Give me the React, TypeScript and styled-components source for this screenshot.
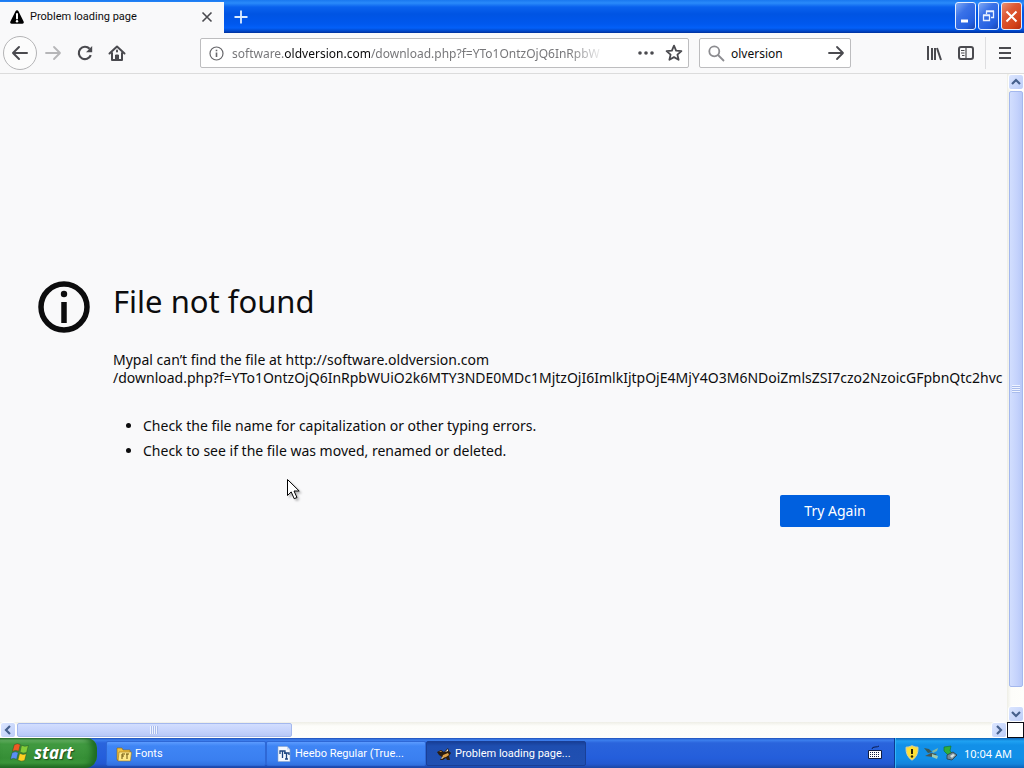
import React from "react";
import styled, { createGlobalStyle, css } from "styled-components";

const GlobalStyle = createGlobalStyle`
  *, *::before, *::after { box-sizing: border-box; }
  html, body, #root { height: 100%; margin: 0; }
  body {
    overflow: hidden;
    font-family: "Noto Sans", Tahoma, "DejaVu Sans", sans-serif;
    font-size: 12px;
    color: #0c0c0d;
    background: #f9f9fa;
  }
  button, input { font: inherit; color: inherit; margin: 0; }
  svg { flex: none; }
`;

const Desktop = styled.div`
  display: flex;
  flex-direction: column;
  height: 100vh;
`;

const TitleBar = styled.header`
  display: flex;
  flex: none;
  height: 33px;
  background: linear-gradient(#1a78f0 0, #2a8bfa 3px, #0a62ee 7px, #0054e3 14px, #0058ee 24px, #0360f8 28px, #0046c8 31px, #00309c 33px);
`;

const Tab = styled.div`
  display: flex;
  align-items: center;
  gap: 5px;
  width: 224px;
  margin-top: 2px;
  padding: 0 8px 1px 9px;
  background: #f9f9fa;
`;

const TabTitle = styled.span`
  flex: 1;
  font-family: Roboto, "Noto Sans", sans-serif;
  font-size: 11px;
  line-height: 16px;
  white-space: nowrap;
`;

const PlainButton = styled.button`
  display: flex;
  align-items: center;
  justify-content: center;
  flex: none;
  padding: 0;
  border: 0;
  background: none;
  color: #4a4a4f;
`;

const NewTabButton = styled(PlainButton)`
  width: 34px;
  color: #dcecff;
`;

const WindowControls = styled.div`
  display: flex;
  gap: 2px;
  margin-left: auto;
  padding: 2px 2px 3px 0;
`;

const WindowButton = styled.button<{ $close?: boolean }>`
  display: flex;
  align-items: center;
  justify-content: center;
  width: 21px;
  height: 28px;
  padding: 0;
  border: 1px solid #e4eeff;
  border-radius: 3px;
  background: ${(p) =>
    p.$close
      ? "linear-gradient(135deg, #ec9274 0, #de5a36 35%, #d4431c 75%, #b52c10 100%)"
      : "linear-gradient(135deg, #7fa9f4 0, #3a72e8 35%, #2560e0 75%, #1a46b4 100%)"};
`;

const Toolbar = styled.nav`
  display: flex;
  flex: none;
  align-items: center;
  height: 41px;
  padding: 0 3px;
  background: #f9f9fa;
  border-bottom: 1px solid #dcdcdc;
`;

const ToolButton = styled(PlainButton)`
  width: 32px;
  height: 32px;
  &:disabled { color: #b6b6b8; }
`;

const BackButton = styled(PlainButton)`
  width: 34px;
  height: 34px;
  border: 1px solid #b4b4b6;
  border-radius: 50%;
  background: #fcfcfc;
`;

const field = css`
  display: flex;
  align-items: center;
  height: 30px;
  border: 1px solid #bdbdbf;
  border-radius: 2px;
  background: #fff;
`;

const AddressBar = styled.div`
  ${field}
  flex: 1;
  min-width: 0;
  margin-left: 67px;
  padding: 0 0 0 8px;
`;

const Address = styled.a`
  flex: 1;
  min-width: 0;
  margin: 0 27px 0 8px;
  padding-top: 1px;
  overflow: hidden;
  white-space: nowrap;
  font-size: 12px;
  line-height: 18px;
  color: #77777a;
  text-decoration: none;
  mask-image: linear-gradient(to left, transparent 0, #000 36px);
  strong { font-weight: 400; color: #0c0c0d; }
`;

const FieldButton = styled(PlainButton)`
  width: 28px;
  height: 28px;
`;

const SearchBar = styled.form`
  ${field}
  width: 152px;
  margin: 0 67px 0 10px;
  padding-left: 8px;
`;

const SearchInput = styled.input`
  flex: 1;
  min-width: 0;
  margin-left: 6px;
  padding: 1px 0 0;
  border: 0;
  outline: 0;
  background: none;
  font-size: 12px;
  line-height: 18px;
`;

const MenuSlot = styled.div`
  display: flex;
  align-items: center;
  height: 32px;
  margin-left: 3px;
  padding-left: 3px;
  border-left: 1px solid #dedee0;
`;

const Viewport = styled.div`
  display: grid;
  grid-template: minmax(0, 1fr) 16px / minmax(0, 1fr) 17px;
  flex: 1;
  min-height: 0;
`;

const Page = styled.main`
  display: flex;
  align-items: center;
  overflow: hidden;
  padding: 12px 0 0 38px;
  background: #f9f9fa;
`;

const ErrorPanel = styled.section`
  display: flex;
  align-items: flex-start;
  gap: 23px;
  flex: 1;
  min-width: 0;
`;

const ErrorBody = styled.div`
  flex: 1;
  min-width: 0;
  font-size: 14px;
  line-height: 18px;
`;

const Heading = styled.h1`
  margin: 0 0 30px;
  font-size: 31px;
  font-weight: 400;
  line-height: 40px;
`;

const Message = styled.p`
  margin: 0;
  white-space: nowrap;
`;

const Hints = styled.ul`
  display: flex;
  flex-direction: column;
  gap: 7px;
  margin: 30px 0 0;
  padding: 0 0 0 30px;
`;

const Actions = styled.div`
  display: flex;
  justify-content: flex-end;
  margin: 35px 117px 0 0;
`;

const TryAgain = styled.button`
  width: 110px;
  height: 32px;
  padding: 0;
  border: 0;
  border-radius: 2px;
  background: #0060df;
  color: #fff;
  font-size: 14px;
`;

const ScrollTrack = styled.div<{ $horizontal?: boolean }>`
  display: flex;
  flex-direction: ${(p) => (p.$horizontal ? "row" : "column")};
  padding-left: ${(p) => (p.$horizontal ? 0 : 1)}px;
  background: linear-gradient(${(p) => (p.$horizontal ? "180deg" : "90deg")}, #eeeee6, #fdfdfa 4px, #fefefb);
`;

const ScrollButton = styled.button`
  display: flex;
  align-items: center;
  justify-content: center;
  flex: none;
  width: 16px;
  height: 16px;
  padding: 0;
  border: 1px solid #fff;
  border-radius: 3px;
  background: linear-gradient(135deg, #dce6ff, #bccdf8);
`;

const Thumb = styled.div<{ $horizontal?: boolean; $share: number }>`
  display: flex;
  align-items: center;
  justify-content: center;
  flex: 0 0 ${(p) => p.$share}%;
  margin: 1px;
  border: 1px solid #a4b8ee;
  border-radius: 2px;
  background: linear-gradient(${(p) => (p.$horizontal ? "180deg" : "90deg")}, #d2defe, #c4d2fc 60%, #b8c9f8);
`;

const TrackSpace = styled.div`
  flex: 1;
`;

const Grip = styled.span<{ $horizontal?: boolean }>`
  width: 8px;
  height: 8px;
  background: repeating-linear-gradient(${(p) => (p.$horizontal ? "90deg" : "180deg")}, #eef3ff 0 1px, #a9bcec 1px 2px);
`;

const SizeCorner = styled.div`
  border: 1px solid #0a0a14;
  background: #fff;
`;

const Taskbar = styled.footer`
  display: flex;
  flex: none;
  height: 30px;
  background: linear-gradient(#1f4fb8 0, #3d80ee 2px, #2a64dc 5px, #245edb 20px, #2358d0 26px, #1c46a4 30px);
  color: #fff;
  font-size: 11px;
`;

const StartButton = styled.button`
  display: flex;
  align-items: center;
  gap: 5px;
  width: 97px;
  padding: 0 0 1px 10px;
  border: 0;
  border-radius: 0 10px 12px 0;
  background: linear-gradient(#2c6a2c 0, #6db86b 2px, #419a41 6px, #368f36 20px, #3b963b 25px, #226a24 30px);
  box-shadow: inset -5px 0 6px #1d6a22;
  color: #fff;
  font: italic 700 17px "Open Sans", "Noto Sans", sans-serif;
  text-shadow: 1px 1px 1px #1c4a1c;
`;

const TaskList = styled.div`
  display: flex;
  flex: 1;
  align-items: center;
  padding: 2px 0 1px 9px;
`;

const TaskButton = styled.button<{ $active?: boolean }>`
  display: flex;
  align-items: center;
  gap: 3px;
  width: 160px;
  height: 25px;
  padding: 0 0 0 9px;
  border: 1px solid ${(p) => (p.$active ? "#193f96" : "#2e68d6")};
  border-radius: 2px;
  background: ${(p) =>
    p.$active
      ? "linear-gradient(#173f98 0, #1e4eb0 4px, #2050b2)"
      : "linear-gradient(#5c9bff 0, #3f85f5 4px, #3a7ff0 18px, #3272e0)"};
  color: #fff;
  font-family: Roboto, "Noto Sans", sans-serif;
  white-space: nowrap;
`;

const Keyboard = styled(PlainButton)`
  width: 38px;
`;

const Tray = styled.div`
  display: flex;
  align-items: center;
  gap: 3px;
  padding: 0 12px 0 9px;
  border-left: 1px solid #0b3a92;
  box-shadow: inset 1px 0 0 #35b6f6;
  background: linear-gradient(#0c64ba 0, #1fa2f2 3px, #1290e8 7px, #1190e8 20px, #1384dc 26px, #0c62b8 30px);
`;

const Clock = styled.time`
  margin-left: 3px;
  white-space: nowrap;
`;

const Pointer = styled.svg`
  position: absolute;
  left: 286px;
  top: 478px;
  filter: drop-shadow(2px 2px 1px #0004);
`;

const Chevron = ({ turn }: { turn: number }) => (
  <svg width="10" height="10" viewBox="0 0 10 10" fill="none" stroke="#46608c" strokeWidth="2.2">
    <path d="M1 7 5 3l4 4" transform={`rotate(${turn} 5 5)`} />
  </svg>
);

const Warning = () => (
  <svg width="16" height="16" viewBox="0 0 16 16">
    <path d="M8 1.2c.7 0 1.2.4 1.5 1l5.1 10.2c.6 1.2 0 2.3-1.3 2.3H2.7c-1.3 0-1.9-1.1-1.3-2.3L6.5 2.2c.3-.6.8-1 1.5-1z" fill="#000" />
    <path d="M8 5v4.5" stroke="#fff" strokeWidth="2" strokeLinecap="round" />
    <circle cx="8" cy="12.3" r="1.2" fill="#fff" />
  </svg>
);

const Flag = () => (
  <svg width="19" height="19" viewBox="0 1 16 16" stroke="#234f25" strokeWidth=".4">
    <path d="M3.5 2.5q2.7-1.8 5.2-.2L7.3 8Q4.8 6.5 2 8.1z" fill="#ee5a24" />
    <path d="M9.7 2.9q2.7 1.5 5.8.2L14 9q-2.900 1.300-5.600-.4z" fill="#83cc38" />
    <path d="M1.7 9.2q2.700-1.700 5.300-.1l-1.400 5.700q-2.700-1.700-5.300 0z" fill="#5a8ff5" />
    <path d="M8.1 9.7q2.700 1.600 5.700.3l-1.500 5.800q-3 1.200-5.700-.4z" fill="#ffd022" />
  </svg>
);

export default function App() {
  return (
    <Desktop>
      <GlobalStyle />
      <TitleBar>
        <Tab>
          <Warning />
          <TabTitle>Problem loading page</TabTitle>
          <PlainButton aria-label="Close tab">
            <svg width="18" height="18" viewBox="0 0 18 18" fill="none" stroke="currentColor" strokeWidth="1.6">
              <path d="m4.5 4.5 9 9m0-9-9 9" />
            </svg>
          </PlainButton>
        </Tab>
        <NewTabButton aria-label="New tab">
          <svg width="16" height="16" viewBox="0 0 16 16" stroke="currentColor" strokeWidth="1.8">
            <path d="M8 1.5v13M1.5 8h13" />
          </svg>
        </NewTabButton>
        <WindowControls>
          <WindowButton aria-label="Minimize">
            <svg width="17" height="17" viewBox="0 0 17 17"><path d="M4 11.5h7v3H4z" fill="#fff" /></svg>
          </WindowButton>
          <WindowButton aria-label="Restore">
            <svg width="17" height="17" viewBox="0 0 17 17" fill="none" stroke="#e8f0ff" strokeWidth="1.3">
              <path d="M3.5 7.5h6v5h-6zM3 7h7M6.5 6V3.5h7v6H11M6 3h8" />
            </svg>
          </WindowButton>
          <WindowButton $close aria-label="Close">
            <svg width="17" height="17" viewBox="0 0 17 17" stroke="#fff" strokeWidth="2"><path d="m3.5 3.5 10 10m0-10-10 10" /></svg>
          </WindowButton>
        </WindowControls>
      </TitleBar>

      <Toolbar>
        <BackButton aria-label="Back">
          <svg width="18" height="18" viewBox="0 0 18 18" fill="none" stroke="currentColor" strokeWidth="2" strokeLinecap="round" strokeLinejoin="round">
            <path d="M16 9H2m6-6L2 9l6 6" />
          </svg>
        </BackButton>
        <ToolButton disabled aria-label="Forward">
          <svg width="18" height="18" viewBox="0 0 18 18" fill="none" stroke="currentColor" strokeWidth="1.8" strokeLinecap="round" strokeLinejoin="round">
            <path d="M2 9h14m-6-6 6 6-6 6" />
          </svg>
        </ToolButton>
        <ToolButton aria-label="Reload">
          <svg width="18" height="18" viewBox="0 0 18 18" fill="none" stroke="currentColor" strokeWidth="2.2">
            <path d="M14.8 11.2A6.2 6.2 0 1 1 13.6 4.8" />
            <path d="M16.2 2v6.2H10z" fill="currentColor" stroke="none" />
          </svg>
        </ToolButton>
        <ToolButton aria-label="Home">
          <svg width="18" height="18" viewBox="0 0 18 18" fill="none" stroke="currentColor" strokeWidth="2" strokeLinecap="round" strokeLinejoin="round">
            <path d="m1.5 9.5 7.5-7 7.5 7M4 9v7h10V9" />
            <path d="M7.5 16v-5h3v5z" fill="currentColor" strokeWidth="1" />
            <path d="M9 6.5v1" />
          </svg>
        </ToolButton>
        <AddressBar>
          <svg width="15" height="15" viewBox="0 0 15 15" fill="none" stroke="#66666a">
            <circle cx="7.5" cy="7.5" r="6.5" strokeWidth="1.2" />
            <path d="M7.5 6.5V11M7.5 3.7v1.5" strokeWidth="1.6" />
          </svg>
          <Address href="#">
            software.<strong>oldversion.com</strong>/download.php?f=YTo1OntzOjQ6InRpbW
          </Address>
          <FieldButton aria-label="Page actions">
            <svg width="16" height="16" viewBox="0 0 16 16" fill="currentColor">
              <circle cx="2" cy="8" r="1.8" /><circle cx="8" cy="8" r="1.8" /><circle cx="14" cy="8" r="1.8" />
            </svg>
          </FieldButton>
          <FieldButton aria-label="Bookmark">
            <svg width="18" height="18" viewBox="0 0 18 18" fill="none" stroke="currentColor" strokeWidth="1.8" strokeLinejoin="round">
              <path d="m9 1.7 2.1 4.900 5.300.5-4 3.500 1.200 5.200L9 13.100l-4.600 2.700 1.200-5.200-4-3.500 5.300-.5z" />
            </svg>
          </FieldButton>
        </AddressBar>
        <SearchBar>
          <svg width="17" height="17" viewBox="0 0 17 17" fill="none" stroke="#8c8c90" strokeWidth="1.8">
            <circle cx="6.3" cy="6.3" r="5" /><path d="m10 10 6 6" />
          </svg>
          <SearchInput aria-label="Search" defaultValue="olversion" />
          <FieldButton type="button" aria-label="Go">
            <svg width="18" height="18" viewBox="0 0 18 18" fill="none" stroke="currentColor" strokeWidth="1.8" strokeLinecap="round" strokeLinejoin="round">
              <path d="M2 9h14m-6-6 6 6-6 6" />
            </svg>
          </FieldButton>
        </SearchBar>
        <ToolButton aria-label="Library">
          <svg width="16" height="16" viewBox="0 0 16 16" stroke="currentColor" strokeWidth="2">
            <path d="M2 1v14M6 3v12M9 3v12M11 3l4 12" />
          </svg>
        </ToolButton>
        <ToolButton aria-label="Sidebars">
          <svg width="16" height="16" viewBox="0 0 16 16" fill="none" stroke="currentColor">
            <rect x="1" y="2" width="14" height="12" rx="2" strokeWidth="2" />
            <path d="M8 2v12" strokeWidth="1.2" /><path d="M3 5.5h3.5M3 8h3.5M4 10.5h2.5" />
          </svg>
        </ToolButton>
        <MenuSlot>
          <ToolButton aria-label="Open menu">
            <svg width="16" height="16" viewBox="0 0 16 16" stroke="currentColor" strokeWidth="2">
              <path d="M2 3h12M2 8h12M2 13h12" />
            </svg>
          </ToolButton>
        </MenuSlot>
      </Toolbar>

      <Viewport>
        <Page>
          <ErrorPanel>
            <svg width="52" height="52" viewBox="0 0 52 52" fill="none" stroke="#0c0c0d">
              <circle cx="26" cy="26" r="23" strokeWidth="5.5" />
              <path d="M26 21v21" strokeWidth="5.5" />
              <circle cx="26" cy="13" r="3.2" fill="#0c0c0d" stroke="none" />
            </svg>
            <ErrorBody>
              <Heading>File not found</Heading>
              <Message>
                Mypal can’t find the file at http://software.oldversion.com
                <br />
                /download.php?f=YTo1OntzOjQ6InRpbWUiO2k6MTY3NDE0MDc1MjtzOjI6ImlkIjtpOjE4MjY4O3M6NDoiZmlsZSI7czo2NzoicGFpbnQtc2hvc
              </Message>
              <Hints>
                <li>Check the file name for capitalization or other typing errors.</li>
                <li>Check to see if the file was moved, renamed or deleted.</li>
              </Hints>
              <Actions>
                <TryAgain>Try Again</TryAgain>
              </Actions>
            </ErrorBody>
          </ErrorPanel>
        </Page>
        <ScrollTrack>
          <ScrollButton aria-label="Scroll up"><Chevron turn={0} /></ScrollButton>
          <Thumb $share={92}><Grip /></Thumb>
          <TrackSpace />
          <ScrollButton aria-label="Scroll down"><Chevron turn={180} /></ScrollButton>
        </ScrollTrack>
        <ScrollTrack $horizontal>
          <ScrollButton aria-label="Scroll left"><Chevron turn={-90} /></ScrollButton>
          <Thumb $horizontal $share={27.3}><Grip $horizontal /></Thumb>
          <TrackSpace />
          <ScrollButton aria-label="Scroll right"><Chevron turn={90} /></ScrollButton>
        </ScrollTrack>
        <SizeCorner />
      </Viewport>

      <Taskbar>
        <StartButton><Flag />start</StartButton>
        <TaskList>
          <TaskButton>
            <svg width="16" height="16" viewBox="0 0 16 16">
              <path d="M1 2h5l1 2h7v10H1z" fill="#f0c040" stroke="#8a6410" strokeWidth=".6" />
              <path d="M3 6h12.500l-1 9H2z" fill="#ffe88a" stroke="#9a7418" strokeWidth=".6" />
              <path d="M6 13V8h3M6 10h2M11 8v5M10 8h3" stroke="#6b520a" fill="none" />
            </svg>
            Fonts
          </TaskButton>
          <TaskButton>
            <svg width="16" height="16" viewBox="0 0 16 16">
              <path d="M2 .5h9l3 3v12H2z" fill="#f4f8ff" stroke="#8ea6c8" strokeWidth=".6" />
              <path d="M11 .5v3h3" fill="#c4d4ee" />
              <path d="M4 8V5h5v3M6.500 5v7M8 7h5v2M10.500 7v6M9 13h3" stroke="#1c4480" strokeWidth="1.3" fill="none" />
            </svg>
            Heebo Regular (True...
          </TaskButton>
          <TaskButton $active>
            <svg width="16" height="16" viewBox="0 0 16 16">
              <path d="M1 6 5 4l3 2 4-4 1 3 2 2-2 3 1 4h-3l-1-2-3 2H4l2-3-3-2z" fill="#2a1c10" />
              <path d="m7 9 5-2 1 2-3 2-4 1zM3 6l2-1 1 1z" fill="#dba048" />
              <path d="m9 6 3-3v2zM5 12l3-1-2 2z" fill="#fff0cf" />
            </svg>
            Problem loading page...
          </TaskButton>
        </TaskList>
        <Keyboard aria-label="On-screen keyboard">
          <svg width="16" height="16" viewBox="0 0 16 16">
            <path d="M5 4q0-2 3-2t4-1" stroke="#0a1c50" fill="none" />
            <path d="M1.5 5.5h13v8h-13z" fill="#fff" stroke="#101c40" />
            <path d="M3 7.5h10M3 9.5h10M3 11.5h10" stroke="#101c40" strokeDasharray="1 1" />
          </svg>
        </Keyboard>
        <Tray>
          <svg width="16" height="16" viewBox="0 0 16 16">
            <path d="M8 .7q3 1.6 6 1.5.5 9-6 13-6.5-4-6-13Q5 2.3 8 .7z" fill="#ffe034" stroke="#d8d0a0" />
            <path d="M8 4v5" stroke="#2c2408" strokeWidth="2" /><circle cx="8" cy="11.5" r="1.2" fill="#2c2408" />
          </svg>
          <svg width="16" height="16" viewBox="0 0 16 16">
            <path d="m1 3 5 1 3 3-4 1z" fill="#3a5a58" /><path d="m9 6 6-3-1 3-4 2z" fill="#84b8a0" />
            <path d="m2 11 6-3 6 1-4 3z" fill="#4d564c" /><path d="m9 9 6 2-1 3-5-2z" fill="#9ccab0" />
          </svg>
          <svg width="16" height="16" viewBox="0 0 16 16">
            <path d="m2 2 7-1-1 5 2 2-3 3-5-5z" fill="#2fae3c" stroke="#12702a" strokeWidth=".6" />
            <path d="m5 10 6-3 4 3-5 5-5-1z" fill="#758a94" stroke="#263c4a" strokeWidth=".8" />
            <path d="m8 11 3-2 2 1-3 3z" fill="#d5e2e4" />
          </svg>
          <Clock>10:04 AM</Clock>
        </Tray>
      </Taskbar>

      <Pointer width="15" height="23" viewBox="0 0 15 23">
        <path d="M1.5 1.5v16l3.7-3.6 3 6.8 2.8-1.2-3-6.5h5.2z" fill="#fff" stroke="#000" />
      </Pointer>
    </Desktop>
  );
}
